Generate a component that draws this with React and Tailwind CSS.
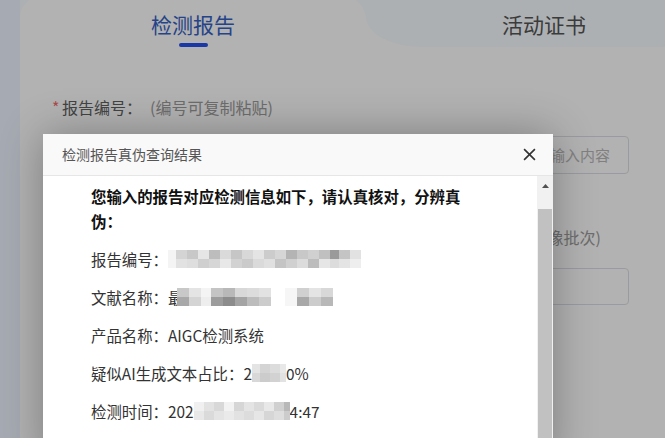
import React from "react";

const font = { fontFamily: '"Noto Sans CJK SC", "Noto Sans", sans-serif' };

// pixelated blur blocks used to hide sensitive values
const Mosaic = ({ cells }) => (
  <span className="inline-flex h-[18px] align-middle blur-[0.7px]">
    {cells.map(([w, top, bottom], i) => (
      <span key={i} className="flex flex-col" style={{ width: w }}>
        <span className="h-1/2" style={{ background: top }} />
        <span className="h-1/2" style={{ background: bottom }} />
      </span>
    ))}
  </span>
);

const reportNoCells = [
  [8, "#f4f4f4", "#f4f4f4"],
  [11, "#d4d4d4", "#e2e2e2"],
  [11, "#c8c8c8", "#dedede"],
  [11, "#e6e6e6", "#cfcfcf"],
  [11, "#bdbdbd", "#d6d6d6"],
  [11, "#dadada", "#e8e8e8"],
  [11, "#c6c6c6", "#d2d2d2"],
  [11, "#d8d8d8", "#cacaca"],
  [11, "#e4e4e4", "#dadada"],
  [11, "#cccccc", "#e0e0e0"],
  [11, "#d6d6d6", "#c4c4c4"],
  [11, "#b4b4b4", "#d0d0d0"],
  [11, "#c8c8c8", "#dcdcdc"],
  [11, "#d0d0d0", "#bcbcbc"],
  [11, "#c0c0c0", "#e6e6e6"],
  [9, "#9a9a9a", "#dcdcdc"],
  [11, "#c4c4c4", "#e4e4e4"],
  [11, "#e2e2e2", "#eeeeee"],
];

const titleCells = [
  [12, "#c8c8c8", "#a8a8a8"],
  [12, "#e4e4e4", "#d4d4d4"],
  [10, "#f4f4f4", "#eeeeee"],
  [12, "#c4c4c4", "#9c9c9c"],
  [12, "#b8b8b8", "#8c8c8c"],
  [12, "#d8d8d8", "#a4a4a4"],
  [12, "#dcdcdc", "#bcbcbc"],
  [12, "#e2e2e2", "#cccccc"],
  [14, "#ffffff", "#ffffff"],
  [12, "#f6f6f6", "#f6f6f6"],
  [12, "#d0d0d0", "#a8a8a8"],
  [12, "#e4e4e4", "#cccccc"],
  [12, "#d8d8d8", "#b8b8b8"],
];

const rateCells = [
  [8, "#e4e4e4", "#d8d8d8"],
  [10, "#d4d4d4", "#cccccc"],
  [10, "#dcdcdc", "#d2d2d2"],
  [6, "#e8e8e8", "#e2e2e2"],
];

const timeCells = [
  [10, "#f0f0f0", "#e8e8e8"],
  [10, "#e2e2e2", "#dadada"],
  [10, "#d8d8d8", "#e4e4e4"],
  [10, "#f2f2f2", "#eaeaea"],
  [10, "#d6d6d6", "#e2e2e2"],
  [10, "#e4e4e4", "#dcdcdc"],
  [10, "#dadada", "#e6e6e6"],
  [10, "#e8e8e8", "#d6d6d6"],
  [10, "#d0d0d0", "#dedede"],
  [6, "#b8b8b8", "#cccccc"],
];

export default function App() {
  return (
    <div className="relative h-[438px] w-[665px] overflow-hidden bg-[#eef4ff]" style={font}>
      {/* page underneath */}
      <div className="ml-[20px] -mt-[4px] h-[460px] w-[680px] rounded-tl-[22px] bg-white">
        <div className="flex h-[51px]">
          <div className="w-[346px] bg-[#f8fcff]">
            <div className="flex h-full flex-col items-center rounded-tl-[22px] rounded-tr-[24px] bg-white pt-[13px]">
              <span className="text-[21px] leading-[30px] text-[#3561c4]">检测报告</span>
              <span className="mt-[4px] h-[4px] w-[29px] rounded-full bg-[#2450ef]" />
            </div>
          </div>
          <div className="flex-1 rounded-bl-[56px_30px] bg-[#f8fcff] pl-[136px] pt-[13px]">
            <span className="text-[21px] leading-[30px] text-[#555]">活动证书</span>
          </div>
        </div>

        <div className="w-[609px] pl-[32px] pt-[48px]">
          <div className="flex items-center text-[16px] leading-[24px]">
            <span className="w-[10px] text-[#f56c6c]">*</span>
            <span className="text-[#626262]">报告编号：</span>
            <span className="ml-[8px] text-[#9c9c9c]">(编号可复制粘贴)</span>
          </div>
          <div className="mt-[17px] flex h-[38px] items-center justify-end rounded-[4px] border border-[#dcdfe6] pr-[18px] text-[15px] text-[#b8b8b8]">
            请输入内容
          </div>

          <div className="mt-[51px] flex items-center whitespace-nowrap text-[16px] leading-[24px]">
            <span className="w-[10px] text-[#f56c6c]">*</span>
            <span className="text-[#626262]">文献名称：</span>
            <span className="text-[#9c9c9c]">(支持多篇文献报告同时查询，请逐个输入或上传对应的图像批次)</span>
          </div>
          <div className="mt-[19px] h-[37px] rounded-[4px] border border-[#dcdfe6]" />
        </div>
      </div>

      {/* dim overlay */}
      <div className="absolute inset-0 bg-black/30" />

      {/* dialog */}
      <div className="absolute left-[43px] top-[134px] flex h-[330px] w-[510px] flex-col bg-white shadow-[0_0_40px_rgba(0,0,0,0.3)]">
        <div className="flex h-[42px] shrink-0 items-center justify-between border-b border-[#e6e6e6] bg-[#f9f9f9] pl-[19px] pr-[17px]">
          <span className="text-[14px] text-[#555]">检测报告真伪查询结果</span>
          <svg width="13" height="13" viewBox="0 0 12 12" className="text-[#333]">
            <path d="M1 1L11 11M11 1L1 11" stroke="currentColor" strokeWidth="1.5" />
          </svg>
        </div>
        <div className="flex flex-1">
          <div className="flex-1 pl-[48px] pt-[8px] text-[15.4px] text-[#333]">
            <p className="w-[380px] font-bold leading-[25px] text-[#111]">
              您输入的报告对应检测信息如下，请认真核对，分辨真伪：
            </p>
            <div className="mt-[14px] flex flex-col gap-[16px] leading-[22px]">
              <div className="flex items-center">
                <span>报告编号：</span>
                <Mosaic cells={reportNoCells} />
              </div>
              <div className="flex items-center">
                <span>文献名称：</span>
                <span className="w-[9px] overflow-hidden">最</span>
                <Mosaic cells={titleCells} />
              </div>
              <div className="flex items-center">
                <span>产品名称：AIGC检测系统</span>
              </div>
              <div className="flex items-center">
                <span>疑似AI生成文本占比：2</span>
                <Mosaic cells={rateCells} />
                <span>0%</span>
              </div>
              <div className="flex items-center">
                <span>检测时间：202</span>
                <Mosaic cells={timeCells} />
                <span>4:47</span>
              </div>
            </div>
          </div>
          <div className="flex w-[16px] flex-col bg-[#f1f1f1]">
            <div className="flex h-[17px] items-center justify-center pt-[2px]">
              <svg width="7" height="4" viewBox="0 0 7 4">
                <path d="M0 4L3.5 0L7 4Z" fill="#505050" />
              </svg>
            </div>
            <div className="mx-[1px] mt-[16px] flex-1 bg-[#c1c1c1]" />
          </div>
        </div>
      </div>
    </div>
  );
}
